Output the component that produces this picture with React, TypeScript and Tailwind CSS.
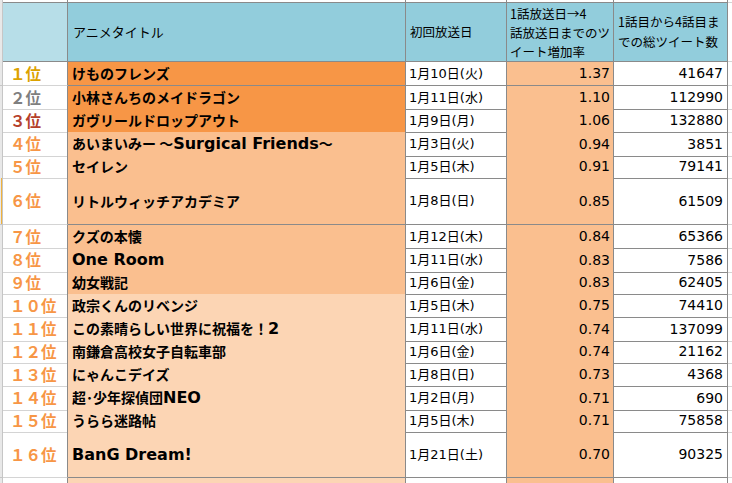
import React from "react";

type Row = {
  rank: string;
  rc: string;
  title: React.ReactNode;
  tb: string;
  date: string;
  rate: string;
  total: string;
  h: string;
  sel?: boolean;
};

const L = ({ children }: { children: React.ReactNode }) => (
  <span className="text-[16px]" style={{ fontFamily: '"DejaVu Sans", sans-serif' }}>
    {children}
  </span>
);

const dark = "bg-[#f79646]";
const mid = "bg-[#fabf8f]";
const light = "bg-[#fcd5b4]";
const orange = "text-[#f79646]";

const rows: Row[] = [
  { rank: "１位", rc: "text-[#dca200]", title: "けものフレンズ", tb: dark, date: "1月10日(火)", rate: "1.37", total: "41647", h: "h-[24px]" },
  { rank: "２位", rc: "text-[#7f7f7f]", title: "小林さんちのメイドラゴン", tb: dark, date: "1月11日(水)", rate: "1.10", total: "112990", h: "h-[23px]" },
  { rank: "３位", rc: "text-[#b5402a]", title: "ガヴリールドロップアウト", tb: dark, date: "1月9日(月)", rate: "1.06", total: "132880", h: "h-[23px]" },
  { rank: "４位", rc: orange, title: <>あいまいみー ～<L>Surgical Friends</L>～</>, tb: mid, date: "1月3日(火)", rate: "0.94", total: "3851", h: "h-[23px]" },
  { rank: "５位", rc: orange, title: "セイレン", tb: mid, date: "1月5日(木)", rate: "0.91", total: "79141", h: "h-[23px]" },
  { rank: "６位", rc: orange, title: "リトルウィッチアカデミア", tb: mid, date: "1月8日(日)", rate: "0.85", total: "61509", h: "h-[47px]", sel: true },
  { rank: "７位", rc: orange, title: "クズの本懐", tb: mid, date: "1月12日(木)", rate: "0.84", total: "65366", h: "h-[23px]" },
  { rank: "８位", rc: orange, title: <L>One Room</L>, tb: mid, date: "1月11日(水)", rate: "0.83", total: "7586", h: "h-[23px]" },
  { rank: "９位", rc: orange, title: "幼女戦記", tb: mid, date: "1月6日(金)", rate: "0.83", total: "62405", h: "h-[23px]" },
  { rank: "１０位", rc: orange, title: "政宗くんのリベンジ", tb: light, date: "1月5日(木)", rate: "0.75", total: "74410", h: "h-[23px]" },
  { rank: "１１位", rc: orange, title: <>この素晴らしい世界に祝福を！<L>2</L></>, tb: light, date: "1月11日(水)", rate: "0.74", total: "137099", h: "h-[23px]" },
  { rank: "１２位", rc: orange, title: "南鎌倉高校女子自転車部", tb: light, date: "1月6日(金)", rate: "0.74", total: "21162", h: "h-[23px]" },
  { rank: "１３位", rc: orange, title: "にゃんこデイズ", tb: light, date: "1月8日(日)", rate: "0.73", total: "4368", h: "h-[23px]" },
  { rank: "１４位", rc: orange, title: <>超･少年探偵団<L>NEO</L></>, tb: light, date: "1月2日(月)", rate: "0.71", total: "690", h: "h-[23px]" },
  { rank: "１５位", rc: orange, title: "うらら迷路帖", tb: light, date: "1月5日(木)", rate: "0.71", total: "75858", h: "h-[23px]" },
  { rank: "１６位", rc: orange, title: <L>BanG Dream!</L>, tb: light, date: "1月21日(土)", rate: "0.70", total: "90325", h: "h-[46px]" },
];

const grid = "grid grid-cols-[3px_65px_338px_101px_107px_114px_4px]";
const cell = "border-b border-r border-[#8a8a8a]";
const jp = { fontFamily: '"Noto Sans CJK JP", sans-serif' };
const mix = { fontFamily: '"DejaVu Sans", "Noto Sans CJK JP", sans-serif' };

export default function App() {
  return (
    <div className="w-[732px] h-[483px] overflow-hidden bg-white text-black" style={jp}>
      {/* top strip */}
      <div className={`${grid} h-[3px]`}>
        <div className="bg-[#e8e8e8] border-r border-[#c6c6c6]" />
        <div className="border-r border-b border-[#8a8a8a]" />
        <div className={cell} />
        <div className={cell} />
        <div className={cell} />
        <div className={cell} />
        <div className="border-b border-[#d4d4d4]" />
      </div>
      {/* header */}
      <div className={`${grid} h-[59px]`}>
        <div className="bg-[#e8e8e8] border-r border-[#c6c6c6]" />
        <div className="bg-[#b7dee8] border-r border-b border-[#8a8a8a]" />
        <div className={`${cell} bg-[#92cddc] flex items-center pl-[5px] text-[13px]`}>アニメタイトル</div>
        <div className={`${cell} bg-[#92cddc] flex items-center pl-[4px] text-[12.5px]`}>初回放送日</div>
        <div className={`${cell} bg-[#92cddc] flex flex-col justify-center pl-[3px] text-[12.5px] leading-[19px] whitespace-nowrap`}>
          <div>1話放送日→4</div>
          <div>話放送日までのツ</div>
          <div>イート増加率</div>
        </div>
        <div className={`${cell} bg-[#92cddc] flex flex-col justify-center pl-[4px] text-[12.5px] leading-[20px] whitespace-nowrap`}>
          <div>1話目から4話目ま</div>
          <div>での総ツイート数</div>
        </div>
        <div className="border-b border-[#d4d4d4]" />
      </div>
      {rows.map((r, i) => (
        <div key={i} className={`${grid} ${r.h}`}>
          <div className="bg-[#e8e8e8] border-r border-b border-[#c6c6c6] flex">
            {r.sel ? <div className="ml-[1px] w-[1px] bg-[#f2b33d]" /> : null}
          </div>
          <div className="border-b border-[#d4d4d4] border-r border-r-[#8a8a8a] flex items-center pl-[7px]">
            <span className={`${r.rc} font-bold text-[15.5px] whitespace-nowrap`}>{r.rank}</span>
          </div>
          <div className={`${cell} ${r.tb} flex items-center pl-[4px] font-bold text-[14px] whitespace-nowrap`}>
            <span>{r.title}</span>
          </div>
          <div className={`${cell} flex items-center pl-[3px] text-[13px] whitespace-nowrap`} style={mix}>
            {r.date}
          </div>
          <div className={`${cell} bg-[#fabf8f] flex items-center justify-end pr-[3px] text-[14px]`} style={mix}>
            {r.rate}
          </div>
          <div className={`${cell} flex items-center justify-end pr-[4px] text-[14px]`} style={mix}>
            {r.total}
          </div>
          <div className="border-b border-[#d4d4d4]" />
        </div>
      ))}
      <div className={`${grid} h-[23px]`}>
        <div className="bg-[#e8e8e8] border-r border-[#c6c6c6]" />
        <div className="border-r border-[#8a8a8a]" />
        <div className="border-r border-[#8a8a8a] bg-[#fcd5b4]" />
        <div className="border-r border-[#8a8a8a]" />
        <div className="border-r border-[#8a8a8a] bg-[#fabf8f]" />
        <div className="border-r border-[#8a8a8a]" />
        <div />
      </div>
    </div>
  );
}
